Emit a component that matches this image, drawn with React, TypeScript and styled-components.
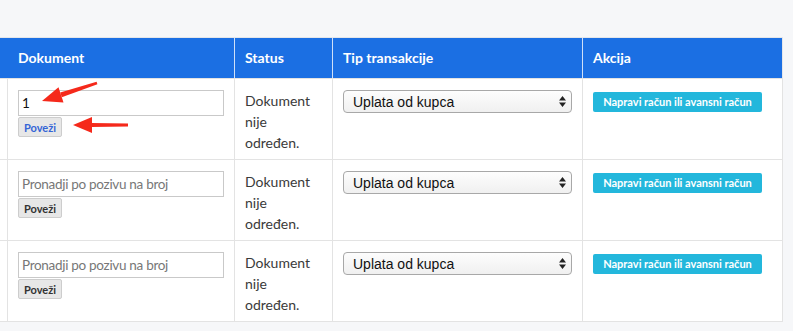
import React from "react";
import styled, { createGlobalStyle } from "styled-components";

const Global = createGlobalStyle`
  html, body { margin: 0; padding: 0; background: #f6f7f9; }
  body { font-family: "Lato", "Open Sans", sans-serif; color: #333; }
  * { box-sizing: border-box; }
`;

const Page = styled.div`
  position: relative;
  width: 793px;
  height: 331px;
  padding-top: 37px;
  overflow: hidden;
`;

const Table = styled.div`
  width: 783px;
  border-top: 1px solid #e4e6ea;
  display: flex;
  flex-direction: column;
`;

const Row = styled.div`
  display: grid;
  grid-template-columns: 8px 227px 98px 250px 200px;
`;

const HeadRow = styled(Row)`
  border-bottom: 1px solid #e3e3e3;
`;

const HeadCell = styled.div`
  background: #1b6fe3;
  color: #fff;
  font-weight: 700;
  font-size: 14px;
  line-height: 20px;
  height: 40px;
  padding: 10px 10px;
  border-right: 1px solid #cfe0f8;
  &:last-child { border-right: 1px solid #e4e6ea; }
`;

const Cell = styled.div`
  background: #fff;
  font-size: 14px;
  line-height: 21px;
  color: #3a3a3a;
  padding: 11px 10px 6px;
  height: 81px;
  border-right: 1px solid #e3e3e3;
  border-bottom: 1px solid #e3e3e3;
  &:first-child { padding: 0; }
`;

const FormCell = styled(Cell)`
  display: flex;
  flex-direction: column;
  align-items: flex-start;
  gap: 1px;
`;

const SearchInput = styled.input`
  width: 206px;
  height: 26px;
  border: 1px solid #c9c9c9;
  border-radius: 0;
  padding: 0 3px;
  font-family: "Lato", sans-serif;
  font-size: 13.5px;
  letter-spacing: -0.3px;
  color: #111;
  background: #fff;
  outline: none;
  &::placeholder { color: #777; }
`;

const LinkButton = styled.button<{ $active?: boolean }>`
  width: 44px;
  height: 20px;
  padding: 0;
  border: 1px solid #cdcdcd;
  border-radius: 2px;
  background: #e7e7e7;
  font-family: "Lato", sans-serif;
  font-weight: 700;
  font-size: 11px;
  color: ${(p) => (p.$active ? "#3565d6" : "#333")};
`;

const SelectWrap = styled.div`
  position: relative;
  width: 229px;
  height: 23px;
`;

const Select = styled.select`
  appearance: none;
  -webkit-appearance: none;
  width: 100%;
  height: 100%;
  border: 1px solid #a8a8a8;
  border-radius: 4px;
  background: linear-gradient(#fdfdfd, #f0f0f0);
  font-family: "Liberation Sans", Arial, sans-serif;
  font-size: 14px;
  color: #111;
  padding: 0 0 0 9px;
  outline: none;
`;

const SelectArrows = styled.svg`
  position: absolute;
  right: 6px;
  top: 6px;
  pointer-events: none;
`;

const ActionButton = styled.button`
  width: 169px;
  height: 20px;
  padding: 0;
  border: none;
  border-radius: 2px;
  background: #23b7dc;
  color: #fff;
  font-family: "Lato", sans-serif;
  font-weight: 700;
  font-size: 11px;
`;

const Overlay = styled.svg`
  position: absolute;
  left: 0;
  top: 0;
  pointer-events: none;
`;

const headers = ["", "Dokument", "Status", "Tip transakcije", "Akcija"];
const rows = [{ value: "1", active: true }, { value: "", active: false }, { value: "", active: false }];

export default function App() {
  return (
    <Page>
      <Global />
      <Table>
        <HeadRow>
          {headers.map((h, i) => (
            <HeadCell key={i}>{h}</HeadCell>
          ))}
        </HeadRow>
        {rows.map((r, i) => (
          <Row key={i}>
            <Cell />
            <FormCell>
              <SearchInput defaultValue={r.value} placeholder="Pronadji po pozivu na broj" />
              <LinkButton $active={r.active}>Poveži</LinkButton>
            </FormCell>
            <Cell>
              Dokument
              <br />
              nije
              <br />
              određen.
            </Cell>
            <Cell>
              <SelectWrap>
                <Select defaultValue="kupac">
                  <option value="kupac">Uplata od kupca</option>
                </Select>
                <SelectArrows width="7" height="11" viewBox="0 0 7 11">
                  <path d="M0 4.5 L3.5 0 L7 4.5 Z M0 6.5 L7 6.5 L3.5 11 Z" fill="#222" />
                </SelectArrows>
              </SelectWrap>
            </Cell>
            <Cell>
              <ActionButton>Napravi račun ili avansni račun</ActionButton>
            </Cell>
          </Row>
        ))}
      </Table>
      <Overlay width="793" height="331" viewBox="0 0 793 331">
        <polygon points="97.4,84.2 96.6,81.8 60.2,92.4 61.8,97.2" fill="#f5291b" />
        <polygon points="42,101 58.5,87.2 63.5,102.4" fill="#f5291b" />
        <polygon points="128,126.5 128,123.5 91,123 91,127" fill="#f5291b" />
        <polygon points="73,125 92,117 92,133" fill="#f5291b" />
      </Overlay>
    </Page>
  );
}
